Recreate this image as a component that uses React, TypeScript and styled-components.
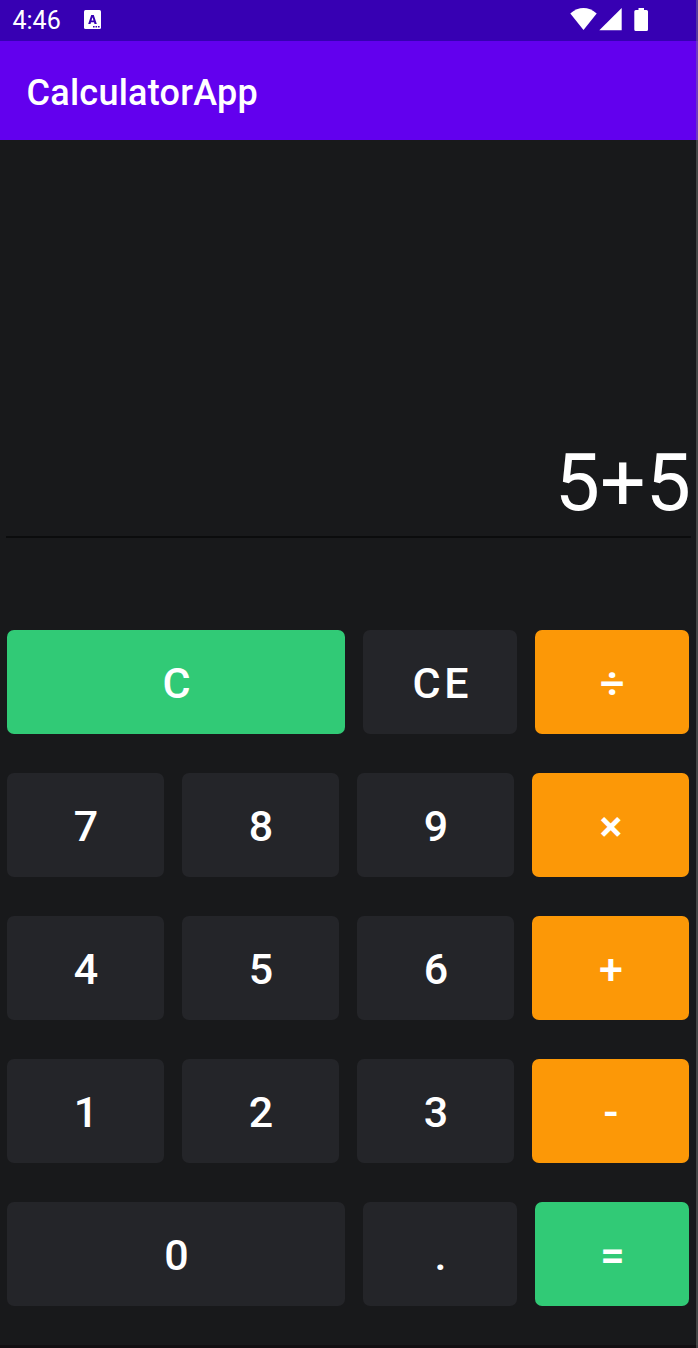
import React from "react";
import styled, { createGlobalStyle } from "styled-components";

const GlobalStyle = createGlobalStyle`
  *, *::before, *::after { box-sizing: border-box; }
  body { margin: 0; background: #18191b; }
`;

const Screen = styled.main`
  display: flex;
  flex-direction: column;
  width: 698px;
  height: 1348px;
  overflow: hidden;
  background: #18191b;
  color: #fff;
  border-bottom: 3px solid #120f12;
  font-family: Roboto, sans-serif;
`;

const Frame = styled.div`
  position: relative;
  width: 698px;

  &::after {
    content: "";
    position: absolute;
    top: 0;
    right: 0;
    width: 2px;
    height: 100%;
    background: rgba(130, 130, 130, 0.42);
  }
`;

const StatusBar = styled.header`
  display: flex;
  align-items: center;
  flex: none;
  height: 41px;
  padding: 0 49px 0 12.5px;
  background: #3700b3;
`;

const Clock = styled.time`
  width: 71.5px;
  font-size: 25px;
  line-height: 41px;
`;

const StatusIcons = styled.div`
  display: flex;
  align-items: center;
  margin-left: auto;
  padding-bottom: 3px;
`;

const AppBar = styled.div`
  display: flex;
  align-items: center;
  flex: none;
  height: 99px;
  padding: 4px 26.5px 0;
  background: #6200ee;
`;

const Title = styled.h1`
  margin: 0;
  font-size: 36px;
  font-weight: 500;
  line-height: 42px;
  letter-spacing: 0.25px;
`;

const Display = styled.output`
  display: flex;
  align-items: flex-end;
  justify-content: flex-end;
  flex: none;
  height: 398px;
  margin: 0 7px 0 6px;
  padding-bottom: 6px;
  border-bottom: 2px solid #0b0c0d;
  font-size: 80.5px;
  line-height: 94px;
`;

const Keypad = styled.section`
  display: flex;
  flex-direction: column;
  gap: 39px;
  padding: 92px 9px 0 7px;
`;

const KeyRow = styled.div<{ $columns: string }>`
  display: grid;
  grid-template-columns: ${(p) => p.$columns};
  gap: 18px;
  height: 104px;
`;

const tones = { dark: "#242529", orange: "#fc9807", green: "#31ca76" };
type Tone = keyof typeof tones;

const Key = styled.button<{ $tone: Tone; $heavy: boolean }>`
  padding: 1px 0 0 4.6px;
  border: 0;
  border-radius: 7px;
  background: ${(p) => tones[p.$tone]};
  color: #fff;
  font: ${(p) => (p.$heavy ? 600 : 500)} 43px/50px Roboto, sans-serif;
  letter-spacing: 0.0893em;
`;

type KeyDef = [label: string, tone?: Tone];
const wide = "338.4px 153.6px 154px";
const even = "repeat(4, 157px)";
const heavyLabels = "÷×-=";

const rows: { columns: string; keys: KeyDef[] }[] = [
  { columns: wide, keys: [["C", "green"], ["CE"], ["÷", "orange"]] },
  { columns: even, keys: [["7"], ["8"], ["9"], ["×", "orange"]] },
  { columns: even, keys: [["4"], ["5"], ["6"], ["+", "orange"]] },
  { columns: even, keys: [["1"], ["2"], ["3"], ["-", "orange"]] },
  { columns: wide, keys: [["0"], ["."], ["=", "green"]] },
];

const KeyboardIcon = styled.svg`
  margin-bottom: 2px;
`;

const SignalIcons = () => (
  <svg width="79" height="24" viewBox="570 7 79 24" fill="#fff">
    <path d="M570.3 13.4Q583.5 2.6 596.7 13.4L583.5 30z" />
    <path d="M599.3 30.3 621.7 8v22.3z" />
    <path d="M638.5 8h5.5v2h2.5a1.5 1.5 0 0 1 1.5 1.5v18a1.5 1.5 0 0 1-1.5 1.5h-10.7a1.5 1.5 0 0 1-1.5-1.5v-18a1.5 1.5 0 0 1 1.5-1.5h2.7z" />
  </svg>
);

export default function App() {
  return (
    <Frame>
      <GlobalStyle />
      <Screen>
        <StatusBar>
          <Clock>4:46</Clock>
          <KeyboardIcon width="17" height="19" viewBox="0 0 17 19">
            <rect width="17" height="19" rx="1.5" fill="#fff" />
            <path
              fill="#3700b3"
              fillRule="evenodd"
              d="M4.2 14 7.2 5h2.6l3 9h-2.3l-.5-1.8H7L6.5 14zM7.5 10.4h2L8.5 7.2zM9 16h1.6v1.4H9zM11.5 16h1.6v1.4h-1.6zM14 16h1.6v1.4H14z"
            />
          </KeyboardIcon>
          <StatusIcons>
            <SignalIcons />
          </StatusIcons>
        </StatusBar>
        <AppBar>
          <Title>CalculatorApp</Title>
        </AppBar>
        <Display>5+5</Display>
        <Keypad>
          {rows.map((row, i) => (
            <KeyRow key={i} $columns={row.columns}>
              {row.keys.map(([label, tone = "dark"]) => (
                <Key key={label} $tone={tone} $heavy={heavyLabels.includes(label)}>
                  {label}
                </Key>
              ))}
            </KeyRow>
          ))}
        </Keypad>
      </Screen>
    </Frame>
  );
}
